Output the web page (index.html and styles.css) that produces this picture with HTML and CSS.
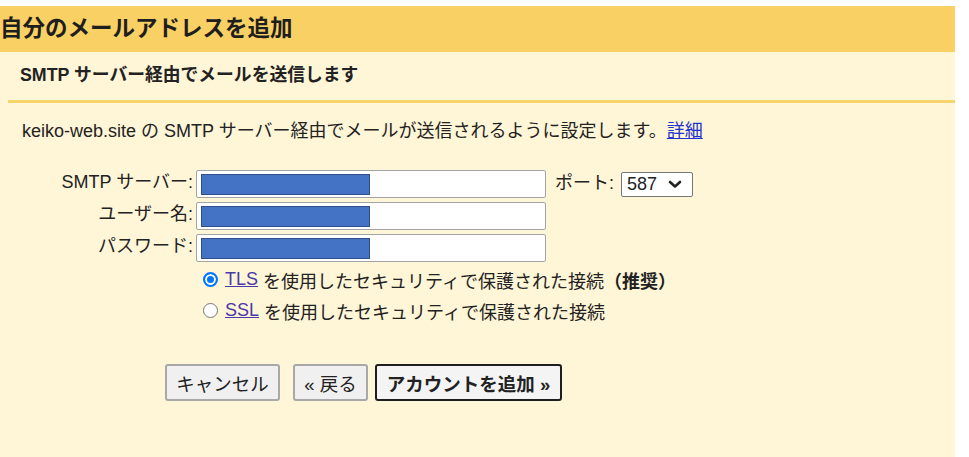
FILE: index.html
```html
<!DOCTYPE html>
<html lang="ja">
<head>
<meta charset="utf-8">
<title>自分のメールアドレスを追加</title>
<link rel="stylesheet" href="styles.css">
</head>
<body>
<div class="panel">
  <div class="hdr">自分のメールアドレスを追加</div>
  <div class="sub">SMTP サーバー経由でメールを送信します</div>
  <div class="divider"></div>
  <div class="intro">keiko-web.site の SMTP サーバー経由でメールが送信されるように設定します。<a class="link" href="#">詳細</a></div>
  <div class="form">
    <label class="lbl">SMTP サーバー:</label>
    <div class="field"><span class="mask"></span></div>
    <div class="port"><span class="plbl">ポート:</span><span class="select">587<svg class="chev" width="14" height="9" viewBox="0 0 14 9"><path d="M2 2 L7 6.5 L12 2" fill="none" stroke="#222" stroke-width="2.6" stroke-linecap="round" stroke-linejoin="round"/></svg></span></div>
    <label class="lbl">ユーザー名:</label>
    <div class="field"><span class="mask"></span></div>
    <div></div>
    <label class="lbl">パスワード:</label>
    <div class="field"><span class="mask"></span></div>
    <div></div>
    <div></div>
    <div class="radios">
      <div class="rrow"><span class="radio on"></span><a class="vlink" href="#">TLS</a> を使用したセキュリティで保護された接続<b class="rec">（推奨）</b></div>
      <div class="rrow"><span class="radio"></span><a class="vlink" href="#">SSL</a> を使用したセキュリティで保護された接続</div>
    </div>
  </div>
  <div class="buttons">
    <button class="btn cancel">キャンセル</button>
    <button class="btn back">« 戻る</button>
    <button class="btn primary">アカウントを追加 »</button>
  </div>
</div>
</body>
</html>
```

FILE: styles.css
```css
html, body {
  margin: 0;
  padding: 0;
  background: #ffffff;
}
body {
  font-family: "Liberation Sans", Arial, "Noto Sans CJK JP", sans-serif;
  color: #222222;
}
.panel {
  margin-top: 6px;
  width: 955px;
  height: 451px;
  background: #fff5d7;
}
.hdr {
  height: 46px;
  line-height: 46px;
  background: #f8d064;
  font-size: 22.5px;
  font-weight: bold;
  color: #1e1e1e;
  white-space: nowrap;
}
.sub {
  height: 48px;
  line-height: 46px;
  padding-left: 20px;
  font-size: 17.8px;
  font-weight: bold;
}
.divider {
  margin-left: 8px;
  height: 3px;
  background: #f8d46e;
}
.intro {
  margin-top: 16px;
  padding-left: 22px;
  font-size: 18px;
  line-height: 24px;
  white-space: nowrap;
}
.link {
  color: #2233cc;
  text-decoration: underline;
}
.form {
  margin-top: 27px;
  display: grid;
  grid-template-columns: 193px 350px auto;
  column-gap: 3px;
  row-gap: 4px;
  align-items: center;
  font-size: 18px;
}
.lbl {
  text-align: right;
  white-space: nowrap;
  line-height: 22px;
  padding-bottom: 4px;
}
.field {
  border: 1px solid #a3a3a3;
  border-radius: 2px;
  background: #ffffff;
  padding: 3px 0 0 4px;
  box-sizing: border-box;
  height: 28px;
}
.mask {
  display: block;
  width: 169px;
  height: 21px;
  background: #4472c4;
  border: 1px solid #2f4f8a;
  box-sizing: border-box;
}
.port {
  padding-left: 6px;
  display: flex;
  align-items: center;
  gap: 7px;
  white-space: nowrap;
}
.plbl {
  line-height: 22px;
  padding-bottom: 3px;
}
.select {
  display: inline-flex;
  align-items: center;
  gap: 11px;
  height: 25px;
  width: 72px;
  box-sizing: border-box;
  padding-left: 5px;
  border: 1px solid #767676;
  border-radius: 2px;
  background: #ffffff;
}
.chev {
  display: block;
}
.radios {
  grid-column: 2 / 4;
  margin-top: -2px;
}
.rrow {
  height: 31px;
  display: flex;
  align-items: center;
  padding-left: 7px;
  white-space: nowrap;
}
.radio {
  width: 15px;
  height: 15px;
  box-sizing: border-box;
  border-radius: 50%;
  border: 1px solid #767676;
  background: #ffffff;
  margin-right: 7px;
  flex: none;
}
.radio.on {
  border: 2px solid #0075ff;
  box-shadow: inset 0 0 0 2px #ffffff;
  background: #0075ff;
}
.vlink {
  color: #4a3aa8;
  text-decoration: underline;
  margin-right: 5px;
}
.rec {
  font-weight: bold;
}
.buttons {
  margin-top: 38px;
  padding-left: 165px;
  display: flex;
  align-items: center;
}
.btn {
  font-family: "Liberation Sans", Arial, "Noto Sans CJK JP", sans-serif;
  font-size: 18.5px;
  color: #222222;
  height: 37px;
  background: #f0f0f0;
  border: 2px solid #a8a8a8;
  border-radius: 3px;
  padding: 0 6px;
  box-sizing: border-box;
  white-space: nowrap;
}
.cancel {
  width: 115px;
}
.back {
  margin-left: 13px;
  width: 75px;
}
.primary {
  margin-left: 7px;
  width: 187px;
  font-weight: bold;
  border: 2px solid #1e1e1e;
  background: #f4f4f4;
}
```
